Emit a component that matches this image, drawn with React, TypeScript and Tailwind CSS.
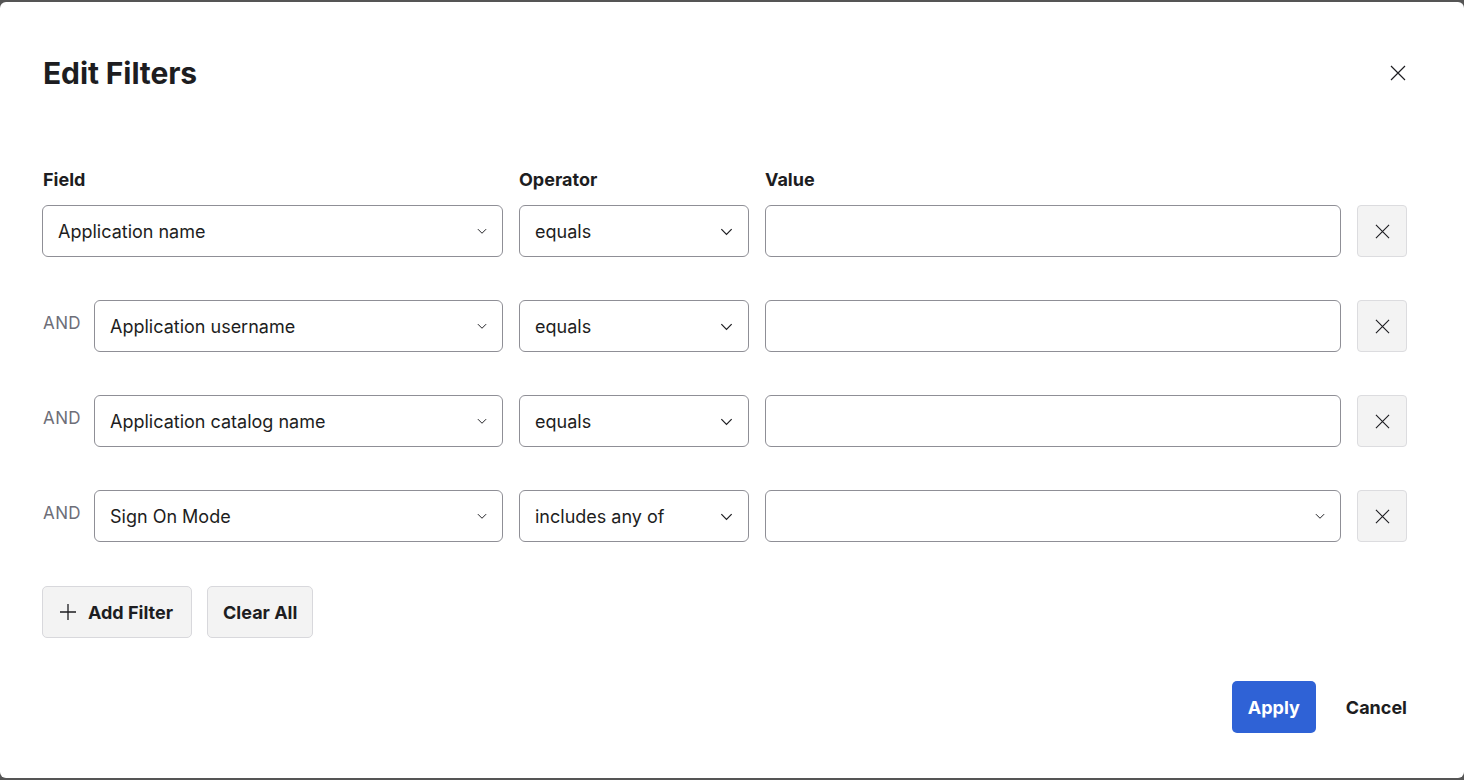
import { useState } from "react";

type Filter = {
  id: number;
  field: string;
  operator: string;
  value: string;
  valueIsSelect?: boolean;
};

const initialFilters: Filter[] = [
  { id: 1, field: "Application name", operator: "equals", value: "" },
  { id: 2, field: "Application username", operator: "equals", value: "" },
  { id: 3, field: "Application catalog name", operator: "equals", value: "" },
  { id: 4, field: "Sign On Mode", operator: "includes any of", value: "", valueIsSelect: true },
];

function Chevron({ size = 12 }: { size?: number }) {
  return (
    <svg width={size} height={size} viewBox="0 0 16 16" fill="none" stroke="#1d1d21" strokeWidth="1.3">
      <path d="M2.5 5.5 8 11l5.5-5.5" />
    </svg>
  );
}

function CloseIcon({ size = 16 }: { size?: number }) {
  return (
    <svg width={size} height={size} viewBox="0 0 16 16" fill="none" stroke="#1d1d21" strokeWidth="1.2">
      <path d="M1 1l14 14M15 1 1 15" />
    </svg>
  );
}

function SelectBox({ label, chevron = 12 }: { label: string; chevron?: number }) {
  return (
    <div className="flex h-[52px] w-full items-center justify-between rounded-md border border-[#8f8f96] bg-white pl-[15px] pr-[14px]">
      <span className="text-[18px] text-[#1d1d21]">{label}</span>
      <Chevron size={chevron} />
    </div>
  );
}

export default function App() {
  const [filters, setFilters] = useState(initialFilters);

  return (
    <div className="h-[780px] w-full bg-[#555555] py-[2px]" style={{ fontFamily: "Inter, 'Noto Sans', sans-serif" }}>
      <div className="flex h-full flex-col rounded-[6px] bg-white pl-[42px] pr-[57px] text-[#1d1d21]">
        <div className="flex items-center justify-between pt-[54px]">
          <h1 className="pl-[1px] text-[30px] font-bold leading-[34px] tracking-[-0.1px]">Edit Filters</h1>
          <button className="mr-[1px] flex h-[24px] w-[16px] items-center justify-center">
            <CloseIcon size={16} />
          </button>
        </div>

        <div className="mt-[78px] grid grid-cols-[461px_230px_1fr_50px] gap-x-[16px]">
          <div className="pl-[1px] text-[18px] font-bold leading-[24px]">Field</div>
          <div className="text-[18px] font-bold leading-[24px]">Operator</div>
          <div className="text-[18px] font-bold leading-[24px]">Value</div>
          <div />
        </div>

        <div className="mt-[13px] flex flex-col gap-[43px]">
          {filters.map((f, i) => (
            <div key={f.id} className="grid grid-cols-[461px_230px_1fr_50px] items-center gap-x-[16px]">
              <div className="flex items-center">
                {i > 0 && (
                  <span className="w-[52px] shrink-0 self-start pl-[1px] pt-[11px] text-[17px] tracking-[0.4px] text-[#6e6e78]">
                    AND
                  </span>
                )}
                <SelectBox label={f.field} />
              </div>
              <SelectBox label={f.operator} chevron={15} />
              {f.valueIsSelect ? (
                <SelectBox label={f.value} />
              ) : (
                <input
                  className="h-[52px] w-full rounded-md border border-[#8f8f96] px-[15px] text-[18px] outline-none"
                  defaultValue={f.value}
                />
              )}
              <button
                onClick={() => setFilters(filters.filter((x) => x.id !== f.id))}
                className="flex h-[52px] w-[50px] items-center justify-center rounded-[4px] border border-[#dcdcdf] bg-[#f3f3f3]"
              >
                <CloseIcon size={15} />
              </button>
            </div>
          ))}
        </div>

        <div className="mt-[44px] flex gap-[15px]">
          <button className="flex h-[52px] items-center gap-[12px] rounded-[5px] border border-[#d8d8dc] bg-[#f3f3f3] pl-[17px] pr-[18px] text-[18px] font-bold">
            <svg width="16" height="16" viewBox="0 0 16 16" fill="none" stroke="#1d1d21" strokeWidth="1.3">
              <path d="M8 0v16M0 8h16" />
            </svg>
            Add Filter
          </button>
          <button className="h-[52px] rounded-[5px] border border-[#d8d8dc] bg-[#f3f3f3] px-[15px] text-[18px] font-bold">
            Clear All
          </button>
        </div>

        <div className="mt-[43px] flex items-center justify-end gap-[30px]">
          <button className="h-[52px] w-[84px] rounded-[5px] bg-[#2f62d6] text-[18px] font-bold text-white">Apply</button>
          <button className="h-[52px] text-[18px] font-bold">Cancel</button>
        </div>
      </div>
    </div>
  );
}
